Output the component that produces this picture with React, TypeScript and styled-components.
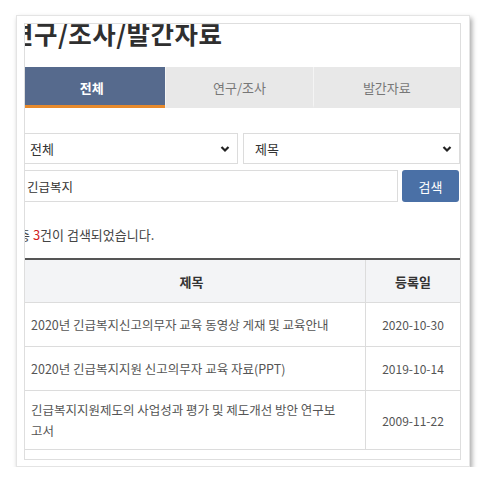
import React from 'react';
import styled, { createGlobalStyle } from 'styled-components';

//styles
const GlobalStyle = createGlobalStyle`
  html, body {
    margin: 0;
    padding: 0;
    background: #fff;
  }
  body {
    font-family: "Noto Sans CJK KR", "Noto Sans", sans-serif;
    color: #333;
  }
`;

const Card = styled.div`
  box-sizing: border-box;
  margin: 15px 0 0 16px;
  width: 454px;
  height: 452px;
  padding: 7px 8px 6px 7px;
  background: #fff;
  border: 1px solid #e4e4e4;
  box-shadow: 2px 3px 5px rgba(0, 0, 0, 0.35);
  display: flex;
`;

const Frame = styled.div`
  flex: 1;
  border: 1px solid #dedede;
  overflow: hidden;
`;

const Page = styled.div`
  margin-left: -7px;
  width: calc(100% + 7px);
`;

const Title = styled.h2`
  margin: -3px 0 0 -8px;
  font-size: 25.5px;
  line-height: 24px;
  font-weight: 700;
  color: #2f2f2f;
  letter-spacing: 0.5px;
  white-space: nowrap;
`;

const TabBar = styled.div`
  margin-top: 22px;
  display: grid;
  grid-template-columns: repeat(3, 1fr);
  height: 41px;
`;

const Tab = styled.div<{ $active?: boolean }>`
  box-sizing: border-box;
  display: flex;
  align-items: center;
  justify-content: center;
  font-size: 13px;
  background: ${(p) => (p.$active ? '#566a8d' : '#e8e8e8')};
  color: ${(p) => (p.$active ? '#fff' : '#777')};
  font-weight: ${(p) => (p.$active ? 700 : 400)};
  border-bottom: 3px solid ${(p) => (p.$active ? '#e78a2c' : 'transparent')};
  padding-top: 3px;
  & + & {
    border-left: 1px solid #f4f4f4;
  }
`;

const FilterRow = styled.div`
  margin-top: 25px;
  display: grid;
  grid-template-columns: 220px 1fr;
  gap: 5px;
`;

const Select = styled.div`
  box-sizing: border-box;
  height: 31px;
  border: 1px solid #dcdcdc;
  background: #fff;
  display: flex;
  align-items: center;
  justify-content: space-between;
  padding: 0 7px 0 11px;
  font-size: 13px;
  color: #333;
`;

const SearchRow = styled.div`
  margin-top: 6px;
  display: flex;
  gap: 4px;
  padding-right: 1px;
`;

const Input = styled.div`
  box-sizing: border-box;
  flex: 1;
  height: 32px;
  border: 1px solid #dcdcdc;
  display: flex;
  align-items: center;
  padding-left: 8px;
  font-size: 12.5px;
  color: #333;
`;

const SearchButton = styled.button`
  width: 57px;
  height: 32px;
  border: none;
  border-radius: 3px;
  background: #4a70a6;
  color: #fff;
  font-family: inherit;
  font-size: 13px;
  padding: 0;
`;

const ResultText = styled.p`
  margin: 23px 0 0 0;
  font-size: 13px;
  line-height: 20px;
  color: #444;
  em {
    font-style: normal;
    color: #d02020;
  }
`;

const Table = styled.table`
  margin-top: 13px;
  width: 100%;
  border-collapse: collapse;
  border-top: 2px solid #555;
  table-layout: fixed;
`;

const Th = styled.th<{ $width?: number }>`
  width: ${(p) => (p.$width ? `${p.$width}px` : 'auto')};
  height: 42px;
  padding: 0;
  background: #f3f4f6;
  font-size: 13px;
  font-weight: 700;
  color: #333;
  border-bottom: 1px solid #dcdcdc;
  & + & {
    border-left: 1px solid #dcdcdc;
  }
`;

const Td = styled.td<{ $center?: boolean }>`
  height: 27px;
  padding: ${(p) => (p.$center ? '8px 0' : '8px 20px 8px 13px')};
  font-size: ${(p) => (p.$center ? '12px' : '12.5px')};
  line-height: 21px;
  color: #555;
  text-align: ${(p) => (p.$center ? 'center' : 'left')};
  border-bottom: 1px solid #dcdcdc;
  & + & {
    border-left: 1px solid #dcdcdc;
  }
`;

const Chevron: React.FC = () => (
  <svg width="10" height="8" viewBox="0 0 10 8">
    <path d="M1.5 2 L5 5.5 L8.5 2" fill="none" stroke="#222" strokeWidth="2.2" />
  </svg>
);

const rows = [
  { title: '2020년 긴급복지신고의무자 교육 동영상 게재 및 교육안내', date: '2020-10-30' },
  { title: '2020년 긴급복지지원 신고의무자 교육 자료(PPT)', date: '2019-10-14' },
  { title: '긴급복지지원제도의 사업성과 평가 및 제도개선 방안 연구보고서', date: '2009-11-22' },
];

//component definition
const App: React.FC = () => {
  return (
    <>
      <GlobalStyle />
      <Card>
        <Frame>
          <Page>
            <Title>연구/조사/발간자료</Title>
            <TabBar>
              <Tab $active>전체</Tab>
              <Tab>연구/조사</Tab>
              <Tab>발간자료</Tab>
            </TabBar>
            <FilterRow>
              <Select>
                <span>전체</span>
                <Chevron />
              </Select>
              <Select>
                <span>제목</span>
                <Chevron />
              </Select>
            </FilterRow>
            <SearchRow>
              <Input>긴급복지</Input>
              <SearchButton>검색</SearchButton>
            </SearchRow>
            <ResultText>
              총 <em>3</em>건이 검색되었습니다.
            </ResultText>
            <Table>
              <thead>
                <tr>
                  <Th>제목</Th>
                  <Th $width={94}>등록일</Th>
                </tr>
              </thead>
              <tbody>
                {rows.map((row) => (
                  <tr key={row.date}>
                    <Td>{row.title}</Td>
                    <Td $center>{row.date}</Td>
                  </tr>
                ))}
              </tbody>
            </Table>
          </Page>
        </Frame>
      </Card>
    </>
  );
};

export default App;
